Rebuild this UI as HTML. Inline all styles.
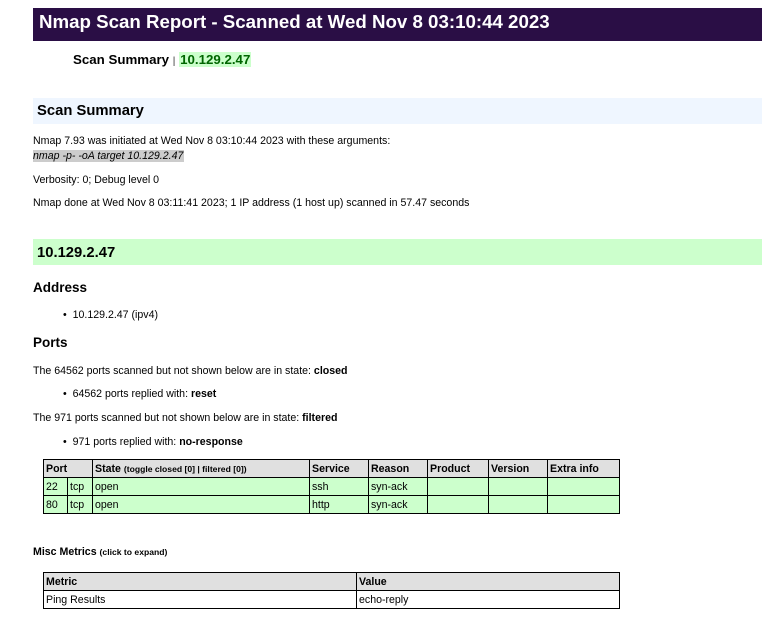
<!DOCTYPE html>
<html><head><style>
body{margin:0;width:779px;height:635px;background:#fff;font-family:"Liberation Sans",sans-serif;color:#000;position:relative;overflow:hidden}
.a{position:absolute;white-space:nowrap}
.t{font-size:10.6px}
table{position:absolute;border-collapse:collapse;font-size:10.6px;table-layout:fixed}
td,th{border:1px solid #000;padding:0 2px;height:17px;text-align:left;vertical-align:middle}
th{background:#e0e0e0;font-weight:bold}
tr.g td{background:#ccffcc}
</style></head><body>
<div class="a" style="left:33px;top:8px;width:729px;height:33px;background:#2a0e45"></div>
<div class="a" style="left:39px;top:9px;font-size:18.7px;font-weight:bold;color:#fff;line-height:26px">Nmap Scan Report - Scanned at Wed Nov 8 03:10:44 2023</div>
<div class="a" style="left:73px;top:51px;font-size:13.3px;font-weight:bold;line-height:17px">Scan Summary <span style="font-size:10px;font-weight:normal;color:#333">|</span> <span style="background:#ccffcc;color:#006600;padding:0 1px">10.129.2.47</span></div>
<div class="a" style="left:33px;top:98px;width:729px;height:26px;background:#eff6ff"></div>
<div class="a" style="left:37px;top:101px;font-size:14.8px;font-weight:bold;line-height:20px">Scan Summary</div>
<div class="a t" style="left:33px;top:135px">Nmap 7.93 was initiated at Wed Nov 8 03:10:44 2023 with these arguments:</div>
<div class="a t" style="left:33px;top:150px;font-style:italic;background:#ccc;padding-right:1px">nmap -p- -oA target 10.129.2.47</div>
<div class="a t" style="left:33px;top:174px">Verbosity: 0; Debug level 0</div>
<div class="a t" style="left:33px;top:197px">Nmap done at Wed Nov 8 03:11:41 2023; 1 IP address (1 host up) scanned in 57.47 seconds</div>
<div class="a" style="left:33px;top:239px;width:729px;height:26px;background:#ccffcc"></div>
<div class="a" style="left:37px;top:243px;font-size:14.8px;font-weight:bold;line-height:20px">10.129.2.47</div>
<div class="a" style="left:33px;top:279px;font-size:13.5px;font-weight:bold;line-height:17px">Address</div>
<div class="a t" style="left:63px;top:309px">•&nbsp; 10.129.2.47 (ipv4)</div>
<div class="a" style="left:33px;top:334px;font-size:13.5px;font-weight:bold;line-height:17px">Ports</div>
<div class="a t" style="left:33px;top:365px">The 64562 ports scanned but not shown below are in state: <b>closed</b></div>
<div class="a t" style="left:63px;top:388px">•&nbsp; 64562 ports replied with: <b>reset</b></div>
<div class="a t" style="left:33px;top:412px">The 971 ports scanned but not shown below are in state: <b>filtered</b></div>
<div class="a t" style="left:63px;top:436px">•&nbsp; 971 ports replied with: <b>no-response</b></div>
<table style="left:43px;top:459px;width:576px">
<colgroup><col style="width:24px"><col style="width:25px"><col style="width:217px"><col style="width:59px"><col style="width:59px"><col style="width:61px"><col style="width:59px"><col style="width:72px"></colgroup>
<tr><th colspan="2">Port</th><th>State <span style="font-size:8.6px">(toggle closed [0] | filtered [0])</span></th><th>Service</th><th>Reason</th><th>Product</th><th>Version</th><th>Extra info</th></tr>
<tr class="g"><td>22</td><td>tcp</td><td>open</td><td>ssh</td><td>syn-ack</td><td></td><td></td><td></td></tr>
<tr class="g"><td>80</td><td>tcp</td><td>open</td><td>http</td><td>syn-ack</td><td></td><td></td><td></td></tr>
</table>
<div class="a" style="left:33px;top:546px;font-size:10.6px;font-weight:bold">Misc Metrics <span style="font-size:8.6px">(click to expand)</span></div>
<table style="left:43px;top:572px;width:576px">
<colgroup><col style="width:313px"><col style="width:263px"></colgroup>
<tr><th>Metric</th><th>Value</th></tr>
<tr><td>Ping Results</td><td>echo-reply</td></tr>
</table>
</body></html>
